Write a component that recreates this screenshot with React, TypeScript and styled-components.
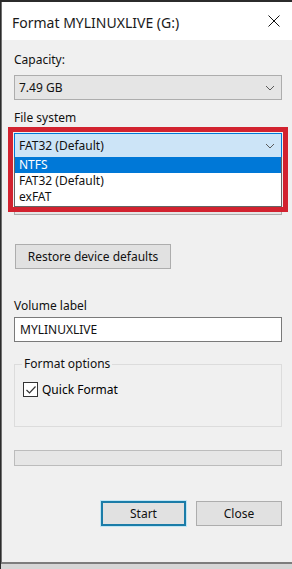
import React from 'react';
import styled, { createGlobalStyle } from 'styled-components';

const GlobalStyle = createGlobalStyle`
  html, body {
    margin: 0;
    padding: 0;
    background: #2b2b2b;
  }
  body {
    font-family: "Noto Sans", "Open Sans", Arial, sans-serif;
    font-size: 12px;
    color: #000;
    overflow: hidden;
  }
`;

const Page = styled.div`
  width: 292px;
  height: 569px;
  padding: 2px 0 0 1px;
  box-sizing: border-box;
  overflow: hidden;
`;

const Window = styled.div`
  width: 300px;
  height: 562px;
  box-sizing: border-box;
  background: #f0f0f0;
  border-left: 1px solid #707070;
  border-bottom: 2px solid #7d7d7d;
  box-shadow: 0 6px 0 #d6d6d6;
  display: flex;
  flex-direction: column;
`;

const TitleBar = styled.div`
  height: 38px;
  background: #fff;
  display: flex;
  align-items: center;
  justify-content: space-between;
  padding: 0 0 0 10px;
  width: 290px;
  box-sizing: border-box;
`;

const Title = styled.div`
  font-size: 14px;
  color: #1a1a1a;
  margin-top: 2px;
`;

const CloseBox = styled.div`
  width: 36px;
  height: 38px;
  display: flex;
  align-items: center;
  justify-content: center;
`;

const Body = styled.div`
  padding: 12px 0 0 12px;
  display: flex;
  flex-direction: column;
  width: 268px;
`;

const Label = styled.div<{ $top?: number }>`
  line-height: 16px;
  height: 16px;
  margin-top: ${(p) => p.$top ?? 0}px;
  color: #111;
`;

const Combo = styled.div<{ $active?: boolean; $top?: number }>`
  height: 25px;
  box-sizing: border-box;
  margin-top: ${(p) => p.$top ?? 0}px;
  border: 1px solid ${(p) => (p.$active ? '#0078d7' : '#adadad')};
  background: ${(p) => (p.$active ? '#cce4f7' : '#e5e5e5')};
  display: flex;
  align-items: center;
  justify-content: space-between;
  padding: 0 6px 0 4px;
  color: #111;
`;

const FieldWrap = styled.div`
  position: relative;
  margin-top: 7px;
  display: flex;
  flex-direction: column;
`;

const DropList = styled.div`
  position: absolute;
  left: 0;
  right: 0;
  top: 24px;
  background: #fff;
  border: 1px solid #646464;
  border-top: none;
  z-index: 2;
  display: flex;
  flex-direction: column;
  padding-bottom: 1px;
`;

const Option = styled.div<{ $selected?: boolean }>`
  height: 16px;
  line-height: 16px;
  padding-left: 4px;
  background: ${(p) => (p.$selected ? '#0078d7' : '#fff')};
  color: ${(p) => (p.$selected ? '#fff' : '#111')};
`;

const Highlight = styled.div`
  position: absolute;
  left: -6px;
  top: -6px;
  width: 280px;
  height: 85px;
  box-sizing: border-box;
  border: 5px solid #d2222f;
  z-index: 3;
  pointer-events: none;
`;

const Button = styled.div<{ $focus?: boolean; $width: number }>`
  width: ${(p) => p.$width}px;
  height: 25px;
  box-sizing: border-box;
  background: #e1e1e1;
  border: ${(p) => (p.$focus ? '2px solid #1b7ca8' : '1px solid #adadad')};
  box-shadow: ${(p) => (p.$focus ? '0 0 0 1px #bfe6f5' : 'none')};
  display: flex;
  align-items: center;
  justify-content: center;
  color: #111;
`;

const ButtonRow = styled.div<{ $top: number; $justify?: string }>`
  display: flex;
  gap: 10px;
  margin-top: ${(p) => p.$top}px;
  justify-content: ${(p) => p.$justify ?? 'flex-start'};
  padding-left: ${(p) => (p.$justify ? 0 : 1)}px;
`;

const TextInput = styled.div`
  height: 25px;
  box-sizing: border-box;
  margin-top: 3px;
  background: #fff;
  border: 1px solid #7a7a7a;
  display: flex;
  align-items: center;
  padding-left: 5px;
  color: #111;
`;

const GroupBox = styled.fieldset`
  margin: 14px 0 0 0;
  padding: 11px 8px 0 8px;
  height: 71px;
  box-sizing: border-box;
  border: 1px solid #dcdcdc;
  min-width: 0;
`;

const Legend = styled.legend`
  padding: 0 2px;
  margin-left: -1px;
  color: #111;
  line-height: 16px;
`;

const CheckRow = styled.div`
  display: flex;
  align-items: center;
  gap: 4px;
  margin-top: -2px;
`;

const CheckBox = styled.div`
  width: 15px;
  height: 15px;
  box-sizing: border-box;
  border: 1px solid #333;
  background: #fff;
  display: flex;
  align-items: center;
  justify-content: center;
`;

const Progress = styled.div`
  height: 16px;
  box-sizing: border-box;
  margin-top: 23px;
  background: #e6e6e6;
  border: 1px solid #bcbcbc;
`;

const Chevron = () => (
  <svg width="10" height="6" viewBox="0 0 10 6">
    <path d="M1 1 L5 5 L9 1" fill="none" stroke="#5a5a5a" strokeWidth="1" />
  </svg>
);

export default function App() {
  return (
    <Page>
      <GlobalStyle />
      <Window>
        <TitleBar>
          <Title>Format MYLINUXLIVE (G:)</Title>
          <CloseBox>
            <svg width="12" height="12" viewBox="0 0 12 12">
              <path d="M0.5 0.5 L11.5 11.5 M11.5 0.5 L0.5 11.5" stroke="#111" strokeWidth="1" />
            </svg>
          </CloseBox>
        </TitleBar>
        <Body>
          <Label>Capacity:</Label>
          <Combo $top={7}>
            <span>7.49 GB</span>
            <Chevron />
          </Combo>
          <Label $top={10}>File system</Label>
          <FieldWrap>
            <Combo $active>
              <span>FAT32 (Default)</span>
              <Chevron />
            </Combo>
            <DropList>
              <Option $selected>NTFS</Option>
              <Option>FAT32 (Default)</Option>
              <Option>exFAT</Option>
            </DropList>
            <Highlight />
            {/* allocation unit size field, hidden under the open list */}
            <Label $top={8} />
            <Combo $top={8} />
          </FieldWrap>
          <ButtonRow $top={29}>
            <Button $width={156}>Restore device defaults</Button>
          </ButtonRow>
          <Label $top={29}>Volume label</Label>
          <TextInput>MYLINUXLIVE</TextInput>
          <GroupBox>
            <Legend>Format options</Legend>
            <CheckRow>
              <CheckBox>
                <svg width="12" height="10" viewBox="0 0 12 10">
                  <path d="M1.5 5 L4.5 8 L10.5 1.5" fill="none" stroke="#333" strokeWidth="1.2" />
                </svg>
              </CheckBox>
              <span>Quick Format</span>
            </CheckRow>
          </GroupBox>
          <Progress />
          <ButtonRow $top={35} $justify="flex-end">
            <Button $width={85} $focus>Start</Button>
            <Button $width={86}>Close</Button>
          </ButtonRow>
        </Body>
      </Window>
    </Page>
  );
}
